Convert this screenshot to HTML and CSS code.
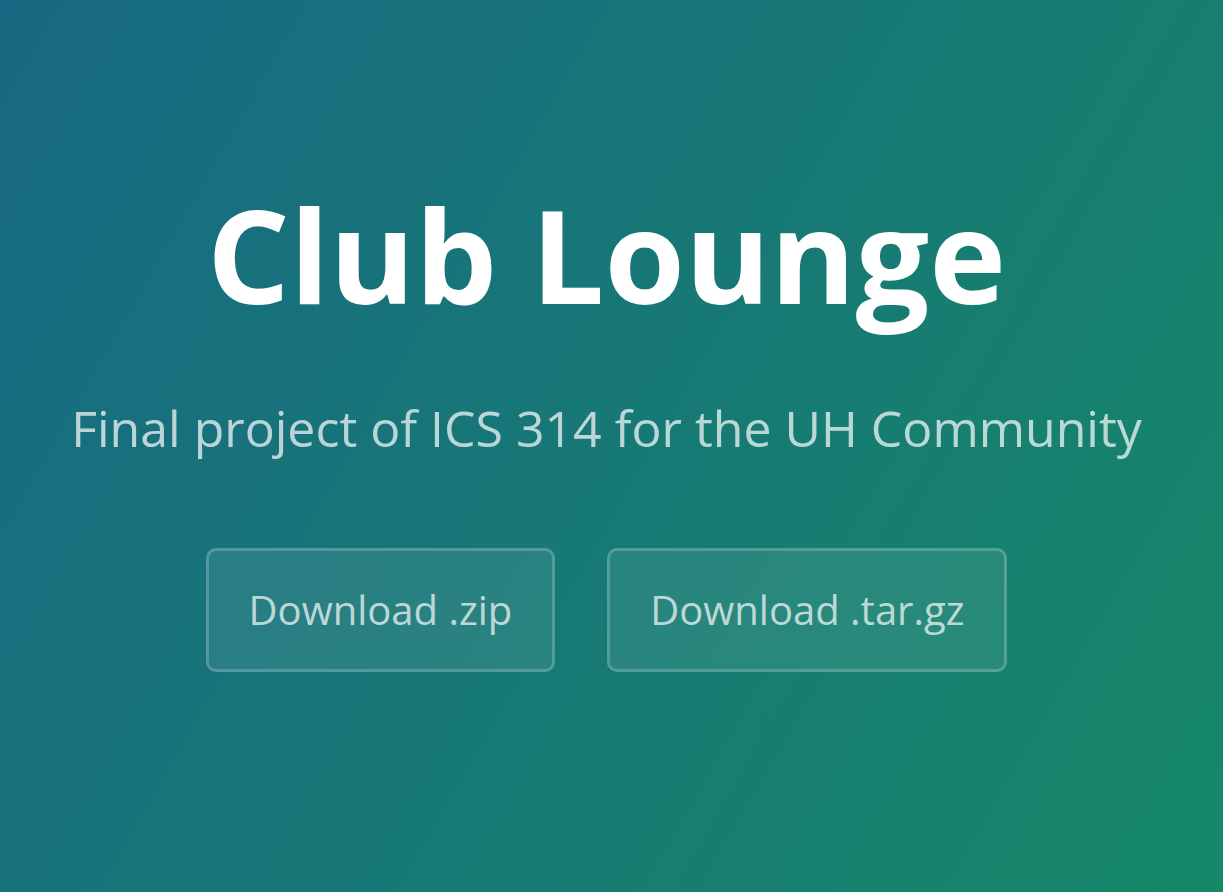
FILE: index.html
```html
<!DOCTYPE html>
<html lang="en">
<head>
<meta charset="utf-8">
<title>Club Lounge</title>
<link rel="stylesheet" href="styles.css">
</head>
<body>
<header class="page-header">
  <h1 class="project-name">Club Lounge</h1>
  <h2 class="project-tagline">Final project of ICS 314 for the UH Community</h2>
  <div class="actions">
    <a class="btn" href="#">Download .zip</a>
    <a class="btn" href="#">Download .tar.gz</a>
  </div>
</header>
</body>
</html>
```

FILE: styles.css
```css
html, body {
  margin: 0;
  padding: 0;
}
body {
  font-family: "Open Sans", "Helvetica Neue", Arial, sans-serif;
  color: #fff;
  line-height: 1.5;
}
.page-header {
  box-sizing: border-box;
  min-height: 892px;
  padding: 156px 10px 0 0;
  display: flex;
  flex-direction: column;
  align-items: center;
  text-align: center;
  background-image: linear-gradient(120deg, #186983, #168868);
}
.project-name {
  margin: 0 0 4px;
  font-size: 130px;
  font-weight: 700;
  line-height: 1.5;
  color: #fff;
}
.project-tagline {
  margin: 36px 0 0;
  font-size: 50px;
  font-weight: 400;
  line-height: 1.5;
  opacity: 0.7;
}
.actions {
  display: flex;
  gap: 52px;
  margin-top: 82px;
}
.btn {
  display: inline-block;
  padding: 29px 40px;
  font-size: 40px;
  line-height: 60px;
  color: rgba(255, 255, 255, 0.7);
  text-decoration: none;
  background-color: rgba(255, 255, 255, 0.08);
  border: 3px solid rgba(255, 255, 255, 0.2);
  border-radius: 10px;
}
```
